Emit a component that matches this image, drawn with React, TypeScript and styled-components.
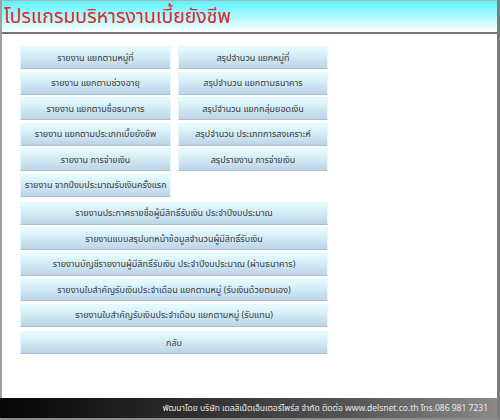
import styled, { createGlobalStyle } from 'styled-components';

const GlobalStyle = createGlobalStyle`
    html, body {
        margin: 0;
        padding: 0;
        background: #ffffff;
    }
`;

const FONT = `Tahoma, "Noto Sans Thai", "Noto Sans", "DejaVu Sans", sans-serif`;

const StyledFrame = styled.div`
    width: 500px;
    height: 420px;
    box-sizing: border-box;
    display: flex;
    flex-direction: column;
    background: #ffffff;
    border-left: 2px solid #a0a0a0;
    border-right: 3px solid #7c7c7c;
    border-bottom: 2px solid #8c8c8c;
    font-family: ${FONT};
`;

const StyledHeader = styled.header`
    height: 34px;
    box-sizing: border-box;
    border-top: 1px solid #b0b0b0;
    border-bottom: 2px solid #777777;
    background: linear-gradient(to bottom, #5ef4ff 0%, #b4faff 55%, #ffffff 100%);
    display: flex;
    align-items: center;
    padding: 0 0 0 2px;
`;

const StyledTitle = styled.h1`
    margin: 0;
    font-size: 19.5px;
    font-weight: 400;
    color: #e0262b;
    line-height: 1;
    padding-top: 3px;
`;

const StyledMain = styled.main`
    flex: 1;
    padding: 12px 0 0 18px;
`;

const StyledGrid = styled.div`
    display: grid;
    grid-template-columns: 151px 150px;
    column-gap: 7px;
    row-gap: 2.5px;
`;

const StyledWideList = styled.div`
    width: 308px;
    display: flex;
    flex-direction: column;
    gap: 2.5px;
    margin-top: 5px;
`;

const StyledButton = styled.button<{ $spaced?: boolean }>`
    height: 23px;
    box-sizing: border-box;
    margin: 0;
    margin-top: ${(p) => (p.$spaced ? '2px' : '0')};
    padding: 0 4px;
    border: 1px solid #e8f6fb;
    border-bottom-color: #a9bfd6;
    background: linear-gradient(to bottom, #e6fcff 0%, #d3ecf5 45%, #bdd3e8 100%);
    font-family: ${FONT};
    font-size: 9px;
    color: #3a3a3a;
    white-space: nowrap;
    cursor: pointer;
`;

const StyledFooter = styled.footer`
    height: 20px;
    box-sizing: border-box;
    margin-left: -2px;
    background: linear-gradient(to right, #050505 0%, #2a2a2a 35%, #555555 70%, #8a8a8a 100%);
    display: flex;
    align-items: center;
    justify-content: flex-end;
    padding-right: 9px;
    font-size: 8.5px;
    color: #e8e8e8;
`;

const gridItems = [
    'รายงาน แยกตามหมู่ที่',
    'สรุปจำนวน แยกหมู่ที่',
    'รายงาน แยกตามช่วงอายุ',
    'สรุปจำนวน แยกตามธนาคาร',
    'รายงาน แยกตามชื่อธนาคาร',
    'สรุปจำนวน แยกกลุ่มยอดเงิน',
    'รายงาน แยกตามประเภทเบี้ยยังชีพ',
    'สรุปจำนวน ประเภทการสงเคราะห์',
    'รายงาน การจ่ายเงิน',
    'สรุปรายงาน การจ่ายเงิน',
    'รายงาน จากปีงบประมาณรับเงินครั้งแรก',
];

const wideItems = [
    'รายงานประกาศรายชื่อผู้มีสิทธิ์รับเงิน ประจำปีงบประมาณ',
    'รายงานแบบสรุปบทหน้าข้อมูลจำนวนผู้มีสิทธิ์รับเงิน',
    'รายงานบัญชีรายงานผู้มีสิทธิ์รับเงิน ประจำปีงบประมาณ (ผ่านธนาคาร)',
    'รายงานใบสำคัญรับเงินประจำเดือน แยกตามหมู่ (รับเงินด้วยตนเอง)',
    'รายงานใบสำคัญรับเงินประจำเดือน แยกตามหมู่ (รับแทน)',
];

function App() {
    return (
        <>
            <GlobalStyle />
            <StyledFrame>
                <StyledHeader>
                    <StyledTitle>โปรแกรมบริหารงานเบี้ยยังชีพ</StyledTitle>
                </StyledHeader>
                <StyledMain>
                    <StyledGrid>
                        {gridItems.map((label) => (
                            <StyledButton key={label}>{label}</StyledButton>
                        ))}
                    </StyledGrid>
                    <StyledWideList>
                        {wideItems.map((label) => (
                            <StyledButton key={label}>{label}</StyledButton>
                        ))}
                        <StyledButton $spaced>กลับ</StyledButton>
                    </StyledWideList>
                </StyledMain>
                <StyledFooter>
                    พัฒนาโดย บริษัท เดลสิเน็ตเอ็นเตอร์ไพร์ส จำกัด ติดต่อ www.delsnet.co.th โทร.086 981 7231
                </StyledFooter>
            </StyledFrame>
        </>
    );
}

export default App;
